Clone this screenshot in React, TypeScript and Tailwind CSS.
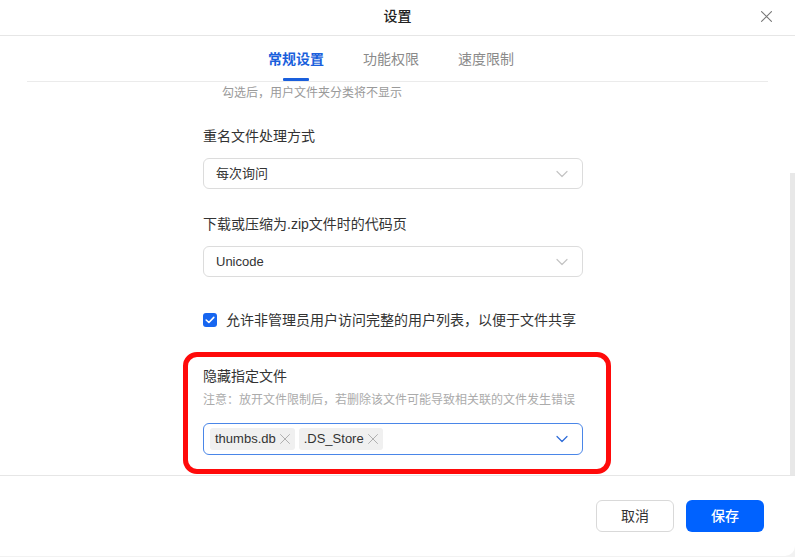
const font = "font-['Liberation_Sans','Noto_Sans_CJK_SC',sans-serif]";

const Chevron = ({ className }: { className: string }) => (
  <svg width="12" height="8" viewBox="0 0 12 8" fill="none" className={className}>
    <path d="M1 1.5L6 6.5L11 1.5" stroke="currentColor" strokeWidth="1.2" strokeLinecap="round" strokeLinejoin="round" />
  </svg>
);

const Cross = ({ size, className }: { size: number; className: string }) => (
  <svg width={size} height={size} viewBox="0 0 10 10" fill="none" className={className}>
    <path d="M0.5 0.5L9.5 9.5M9.5 0.5L0.5 9.5" stroke="currentColor" strokeWidth="1" strokeLinecap="round" />
  </svg>
);

const SelectBox = ({ value }: { value: string }) => (
  <div className="flex h-[31px] w-[380px] items-center justify-between rounded-[6px] border border-[#dcdcdc] pl-[12px] pr-[14px]">
    <span className="text-[13px] leading-[18px] text-[#333]">{value}</span>
    <Chevron className="text-[#c4c4c4]" />
  </div>
);

const Tag = ({ label }: { label: string }) => (
  <div className="flex h-[22px] items-center gap-[4px] rounded-[3px] bg-[#f0f0f0] pl-[5px] pr-[5px]">
    <span className="text-[13px] leading-[16px] text-[#333]">{label}</span>
    <Cross size={10} className="text-[#b0b0b0]" />
  </div>
);

export default function App() {
  const tabs = ["常规设置", "功能权限", "速度限制"];

  return (
    <div className={`h-[557px] w-[795px] overflow-hidden bg-[#f2f2f2] ${font}`}>
      <div className="flex h-[556px] flex-col overflow-hidden rounded-br-[10px] bg-white">
        {/* Header */}
        <div className="relative flex h-[36px] shrink-0 items-start justify-center border-b border-[#e6e6e6] pt-[6px]">
          <span className="text-[14px] font-medium leading-[20px] text-[#222]">设置</span>
          <Cross size={11} className="absolute right-[23px] top-[11px] text-[#777]" />
        </div>

        {/* Tabs */}
        <div className="mx-[27px] flex h-[46px] shrink-0 gap-[39px] border-b border-[#ebebeb] pl-[241px]">
          {tabs.map((t, i) => (
            <div key={t} className="flex flex-col items-center pt-[13px]">
              <span
                className={
                  i === 0
                    ? "text-[14px] font-semibold leading-[20px] text-[#1a5fdc]"
                    : "text-[14px] leading-[20px] text-[#8a8a8a]"
                }
              >
                {t}
              </span>
              {i === 0 && <div className="mt-[9px] h-[3px] w-[26px] rounded-[1px] bg-[#1a5fdc]" />}
            </div>
          ))}
        </div>

        {/* Scroll area */}
        <div className="flex h-[393px] shrink-0">
          <div className="flex flex-1 flex-col pl-[203px] pt-[3px]">
            <p className="pl-[19px] text-[12px] leading-[16px] text-[#9a9a9a]">勾选后，用户文件夹分类将不显示</p>

            <p className="mt-[25px] text-[14px] leading-[20px] text-[#333]">重名文件处理方式</p>
            <div className="mt-[12px]">
              <SelectBox value="每次询问" />
            </div>

            <p className="mt-[25px] text-[14px] leading-[20px] text-[#333]">下载或压缩为.zip文件时的代码页</p>
            <div className="mt-[12px]">
              <SelectBox value="Unicode" />
            </div>

            <div className="mt-[33px] flex items-center gap-[9px]">
              <div className="flex h-[14px] w-[14px] items-center justify-center rounded-[3px] bg-[#1766f0]">
                <svg width="10" height="8" viewBox="0 0 10 8" fill="none">
                  <path d="M1.2 4L3.9 6.5L8.8 1.4" stroke="white" strokeWidth="1.6" strokeLinecap="round" strokeLinejoin="round" />
                </svg>
              </div>
              <span className="text-[14px] leading-[20px] text-[#333]">允许非管理员用户访问完整的用户列表，以便于文件共享</span>
            </div>

            {/* Highlighted section */}
            <div className="-ml-[20px] mt-[22px] w-[428px] rounded-[14px] border-[5px] border-[#ff0a0a] pb-[14px] pl-[15px] pt-[9px]">
              <p className="text-[14px] leading-[20px] text-[#333]">隐藏指定文件</p>
              <p className="mt-[6px] text-[12px] leading-[16px] text-[#ababab]">
                注意：放开文件限制后，若删除该文件可能导致相关联的文件发生错误
              </p>
              <div className="mt-[15px] flex h-[32px] w-[380px] items-center justify-between rounded-[6px] border border-[#4a86e8] pl-[6px] pr-[14px]">
                <div className="flex items-center gap-[4px]">
                  <Tag label="thumbs.db" />
                  <Tag label=".DS_Store" />
                </div>
                <Chevron className="text-[#2b6ad8]" />
              </div>
            </div>
          </div>
          <div className="flex w-[5px] flex-col">
            <div className="mt-[91px] flex-1 bg-[#e8e8e8]" />
          </div>
        </div>

        {/* Footer */}
        <div className="flex flex-1 items-start justify-end gap-[12px] border-t border-[#e6e6e6] pr-[31px] pt-[24px]">
          <button className="h-[32px] w-[78px] rounded-[6px] border border-[#d9d9d9] bg-white text-[14px] text-[#333]">
            取消
          </button>
          <button className="h-[32px] w-[78px] rounded-[6px] bg-[#0062ff] text-[14px] font-medium text-white">
            保存
          </button>
        </div>
      </div>
    </div>
  );
}
